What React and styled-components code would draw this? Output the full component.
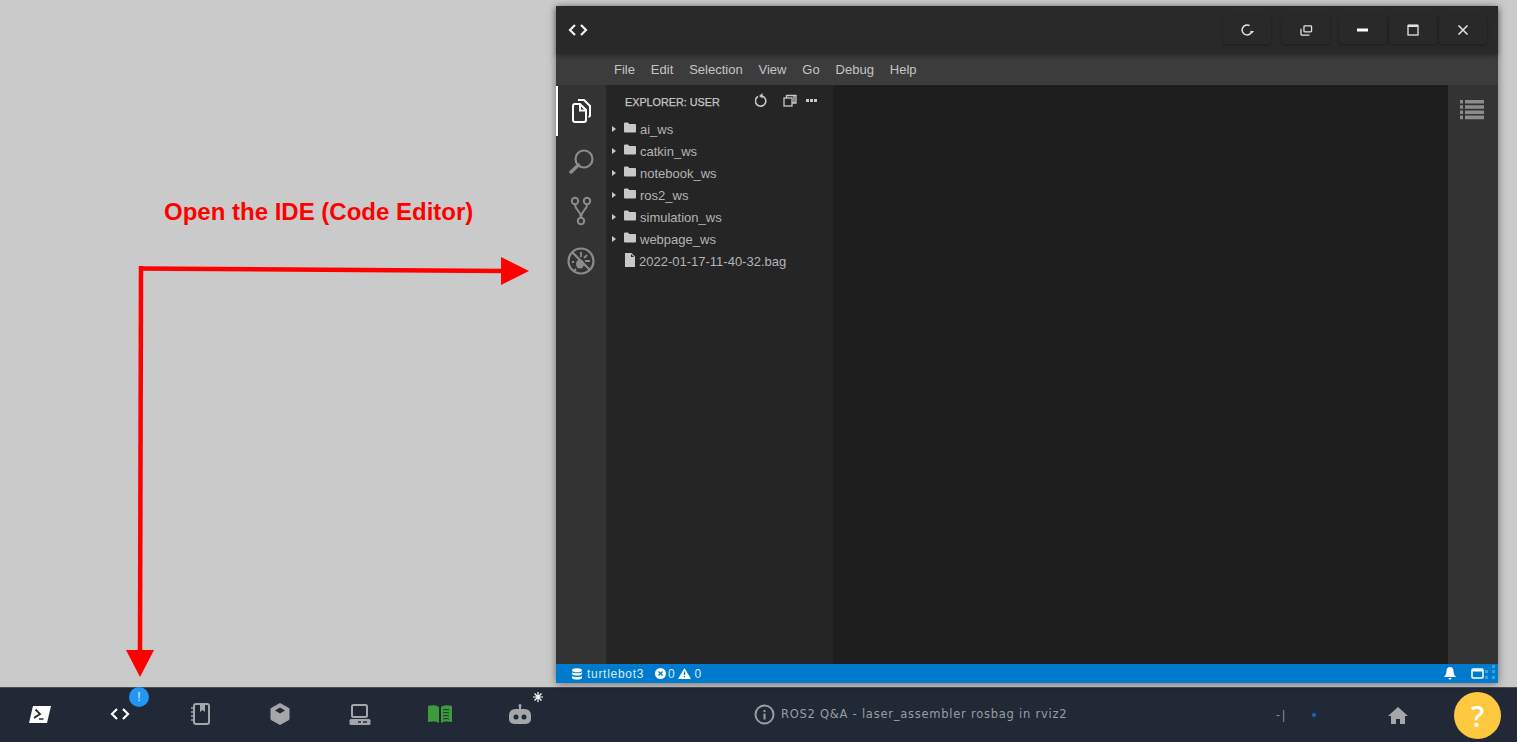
import React from "react";
import styled, { createGlobalStyle } from "styled-components";

const GlobalStyle = createGlobalStyle`
  html, body { margin: 0; padding: 0; height: 100%; overflow: hidden; }
  body { background: #cacaca; font-family: "Liberation Sans", Arial, sans-serif; }
`;

const Page = styled.div`
  width: 1517px;
  height: 742px;
  display: flex;
  flex-direction: column;
`;

const Stage = styled.div`
  position: relative;
  flex: 1;
  display: flex;
  justify-content: flex-end;
  padding: 6px 19px 4px 0;
`;

const Caption = styled.div`
  position: absolute;
  left: 164px;
  top: 197px;
  font-size: 24px;
  line-height: 30px;
  font-weight: 700;
  color: #ff0000;
  white-space: nowrap;
`;

const Arrows = styled.svg`
  position: absolute;
  left: 0;
  top: 0;
`;

const Window = styled.div`
  width: 942px;
  display: flex;
  flex-direction: column;
  box-shadow: 0 1px 8px rgba(0, 0, 0, 0.45);
`;

const TitleBar = styled.div`
  height: 48px;
  flex: none;
  display: flex;
  align-items: center;
  padding: 0 11px 0 12px;
  background: #292929;
  color: #f2f2f2;
  box-shadow: 0 2px 5px rgba(0, 0, 0, 0.3);
  position: relative;
  z-index: 1;
`;

const TitleActions = styled.div`
  margin-left: auto;
  display: flex;
  gap: 2px;
`;

const TitleBtn = styled.div`
  width: 48px;
  height: 28px;
  margin-left: ${(p) => p.$space || 0}px;
  display: flex;
  align-items: center;
  justify-content: center;
  border-radius: 4px;
  background: #292929;
  box-shadow: 0 1px 3px rgba(0, 0, 0, 0.35);
  color: #e4e4e4;
`;

const MenuBar = styled.div`
  height: 31px;
  flex: none;
  display: flex;
  align-items: center;
  gap: 15.9px;
  padding-left: 58px;
  background: #3c3c3c;
  color: #c4c4c4;
  font-size: 13px;
`;

const Workbench = styled.div`
  flex: 1;
  min-height: 0;
  display: flex;
`;

const ActivityBar = styled.div`
  width: 50px;
  flex: none;
  background: #333333;
  padding-top: 1px;
`;

const ActivityItem = styled.div`
  height: 50px;
  box-sizing: border-box;
  display: flex;
  align-items: center;
  justify-content: center;
  color: ${(p) => (p.$active ? "#ffffff" : "#8c8c8c")};
  border-left: 2px solid ${(p) => (p.$active ? "#ffffff" : "transparent")};
  padding-right: 2px;
`;

const SideBar = styled.div`
  width: 227px;
  flex: none;
  background: #252526;
`;

const SideHeader = styled.div`
  height: 33px;
  display: flex;
  align-items: center;
  padding: 0 16px 0 19px;
  color: #c6c6c6;
  font-size: 10.8px;
  -webkit-text-stroke: 0.25px #c6c6c6;
`;

const SideActions = styled.div`
  margin-left: auto;
  display: flex;
  align-items: center;
  padding-bottom: 2px;
  color: #c8c8c8;
`;

const SideAction = styled.svg`
  margin-left: ${(p) => p.$space || 0}px;
`;

const TreeRow = styled.div`
  height: 22px;
  display: flex;
  align-items: center;
  padding-left: 6px;
  color: #b4b4b4;
  font-size: 13px;
  white-space: nowrap;
`;

const Caret = styled.span`
  width: 0;
  height: 0;
  margin-right: 8px;
  border-left: 4px solid ${(p) => (p.$hidden ? "transparent" : "#c8c8c8")};
  border-top: 3px solid transparent;
  border-bottom: 3px solid transparent;
`;

const TreeIcon = styled.svg`
  flex: none;
  margin: 0 ${(p) => p.$gap}px 3px 0;
  color: #c8c8c8;
`;

const Editor = styled.div`
  flex: 1;
  background: #1e1e1e;
`;

const RightRail = styled.div`
  width: 50px;
  flex: none;
  box-sizing: border-box;
  background: #333333;
  display: flex;
  justify-content: center;
  padding: 15px 2px 0 0;
  color: #8c8c8c;
`;

const StatusBar = styled.div`
  position: relative;
  height: 19px;
  flex: none;
  display: flex;
  align-items: center;
  padding: 0 8px 0 15px;
  background: #007acc;
  color: #d8ecf8;
  font-size: 12px;
  letter-spacing: 0.7px;
`;

const StatusItem = styled.span`
  display: flex;
  align-items: center;
  gap: ${(p) => p.$gap || 3}px;
  margin-right: ${(p) => p.$after || 0}px;
`;

const StatusRight = styled.div`
  margin-left: auto;
  display: flex;
  align-items: center;
  gap: 15px;
  color: #ffffff;
  padding: 0 6px 1px 0;
`;

const GripDots = styled.svg`
  position: absolute;
  right: 2px;
  top: 0;
`;

const BottomBar = styled.div`
  height: 55px;
  flex: none;
  display: flex;
  align-items: center;
  background: #212936;
  border-top: 1px solid #4a4d52;
  box-sizing: border-box;
`;

const Dock = styled.div`
  display: flex;
`;

const DockBtn = styled.div`
  position: relative;
  width: 80px;
  height: 54px;
  box-sizing: border-box;
  padding-bottom: 2px;
  display: flex;
  align-items: center;
  justify-content: center;
  color: ${(p) => p.$color || "#a4a6a9"};
`;

const Badge = styled.span`
  position: absolute;
  left: 49px;
  top: -1px;
  width: 20px;
  height: 20px;
  border-radius: 50%;
  background: #2196f3;
  color: #e8f4ff;
  font-size: 12px;
  line-height: 20px;
  text-align: center;
`;

const Sparkle = styled.svg`
  position: absolute;
  left: 53px;
  top: 4px;
`;

const Lesson = styled.div`
  margin-left: 194px;
  padding-bottom: 2px;
  display: flex;
  align-items: center;
  gap: 6px;
  color: #9a9da1;
  font-family: "DejaVu Sans", sans-serif;
  font-size: 11.5px;
  letter-spacing: 0.75px;
  white-space: nowrap;
`;

const RightTools = styled.div`
  margin-left: auto;
  display: flex;
  align-items: center;
  padding-right: 16px;
`;

const Signal = styled.span`
  color: #8b8f95;
  font-size: 12px;
  letter-spacing: 2px;
  width: 36px;
`;

const Dot = styled.span`
  width: 4px;
  height: 4px;
  border-radius: 50%;
  background: #1c66b5;
  margin-right: 72px;
`;

const HelpBtn = styled.div`
  width: 47px;
  height: 47px;
  margin-left: 46px;
  border-radius: 50%;
  background: #ffc93f;
  color: #ffffff;
  display: flex;
  align-items: center;
  justify-content: center;
  font-family: "Open Sans", sans-serif;
  font-size: 29px;
  font-weight: 600;
`;

const CodeIcon = ({ size = 20 }) => (
  <svg width={size} height={size * 0.7} viewBox="0 0 20 14" fill="none" stroke="currentColor" strokeWidth="2.2">
    <path d="M7 2 2 7l5 5M13 2l5 5-5 5" />
  </svg>
);

const FolderIcon = () => (
  <TreeIcon $gap={4} width="12" height="11" viewBox="0 0 12 11" fill="currentColor">
    <path d="M0 1.5A1 1 0 0 1 1 .5h3l1.2 1.5H11a1 1 0 0 1 1 1V9.5a1 1 0 0 1-1 1H1a1 1 0 0 1-1-1z" />
  </TreeIcon>
);

const FileIcon = () => (
  <TreeIcon $gap={3} width="12" height="14" viewBox="0 0 12 14" fill="currentColor">
    <path d="M1 0h6.5L11 3.5V14H1zM7 1v3h3z" fillRule="evenodd" />
  </TreeIcon>
);

const rows = ["ai_ws", "catkin_ws", "notebook_ws", "ros2_ws", "simulation_ws", "webpage_ws"];
const menus = ["File", "Edit", "Selection", "View", "Go", "Debug", "Help"];

export default function App() {
  return (
    <Page>
      <GlobalStyle />
      <Stage>
        <Caption>Open the IDE (Code Editor)</Caption>
        <Arrows width="556" height="687" viewBox="0 0 556 687">
          <path d="M139 268.500 503 271" stroke="#ff0000" strokeWidth="4.500" fill="none" />
          <path d="M141 266 140 652" stroke="#ff0000" strokeWidth="4.500" fill="none" />
          <path d="M501 257 529 271 501 285z" fill="#ff0000" />
          <path d="M126 650h28l-14 27z" fill="#ff0000" />
        </Arrows>
        <Window>
          <TitleBar>
            <CodeIcon />
            <TitleActions>
              <TitleBtn>
                <svg width="14" height="14" viewBox="0 0 14 14" fill="none" stroke="currentColor" strokeWidth="1.500">
                  <path d="M12 8A5 5 0 1 1 9.500 2.500" />
                  <path d="M10 8h4l-2 2.500z" fill="currentColor" stroke="none" />
                </svg>
              </TitleBtn>
              <TitleBtn $space={9}>
                <svg width="13" height="11" viewBox="0 0 15 13" fill="none" stroke="currentColor" strokeWidth="1.500">
                  <rect x="4.500" y="1" width="9" height="7" rx="1" />
                  <path d="M1 4.500V11a1 1 0 0 0 1 1h9" />
                </svg>
              </TitleBtn>
              <TitleBtn $space={7}>
                <svg width="12" height="4" viewBox="0 0 12 4"><rect width="11" height="3" y="0.500" fill="#fff" /></svg>
              </TitleBtn>
              <TitleBtn>
                <svg width="12" height="12" viewBox="0 0 12 12" fill="none" stroke="currentColor">
                  <rect x="1" y="1.500" width="10" height="9.500" strokeWidth="1.300" />
                  <rect x="1" y="0.500" width="10" height="2.500" fill="currentColor" stroke="none" />
                </svg>
              </TitleBtn>
              <TitleBtn>
                <svg width="12" height="12" viewBox="0 0 12 12" stroke="currentColor" strokeWidth="1.500">
                  <path d="M1.500 1.500l9 9M10.500 1.500l-9 9" />
                </svg>
              </TitleBtn>
            </TitleActions>
          </TitleBar>
          <MenuBar>
            {menus.map((m) => (
              <span key={m}>{m}</span>
            ))}
          </MenuBar>
          <Workbench>
            <ActivityBar>
              <ActivityItem $active>
                <svg width="24" height="26" viewBox="0 0 24 26" fill="none" stroke="currentColor" strokeWidth="2">
                  <path d="M6 6h5l6 6v10a2 2 0 0 1-2 2H6a2 2 0 0 1-2-2V8a2 2 0 0 1 2-2z" />
                  <path d="M11 6.500v6h5.500" />
                  <path d="M9 2h6l6 6v9.500a2 2 0 0 1-1.500 1.500" />
                </svg>
              </ActivityItem>
              <ActivityItem>
                <svg width="26" height="26" viewBox="0 0 26 26" fill="none" stroke="currentColor">
                  <circle cx="16" cy="11" r="8.500" strokeWidth="2.200" />
                  <path d="M10.500 17 3 24" strokeWidth="3.400" strokeLinecap="round" />
                </svg>
              </ActivityItem>
              <ActivityItem>
                <svg width="22" height="30" viewBox="0 0 22 30" fill="none" stroke="currentColor" strokeWidth="2">
                  <circle cx="5" cy="5" r="3.200" />
                  <circle cx="17" cy="5" r="3.200" />
                  <circle cx="11" cy="25" r="3.200" />
                  <path d="M5 8.500c0 6 6 6 6 13M17 8.500c0 6-6 6-6 13" />
                </svg>
              </ActivityItem>
              <ActivityItem>
                <svg width="28" height="28" viewBox="0 0 28 28" fill="none" stroke="currentColor" strokeWidth="2.200">
                  <circle cx="14" cy="14" r="12.500" />
                  <path d="M5 5l18 18" />
                  <ellipse cx="13" cy="17" rx="4" ry="4.500" fill="currentColor" stroke="none" />
                  <path d="M14 5v5M20 8l-3 3M23 14h-5M7 15H5M9 22l-2 2" strokeWidth="1.800" />
                </svg>
              </ActivityItem>
            </ActivityBar>
            <SideBar>
              <SideHeader>
                EXPLORER: USER
                <SideActions>
                  <SideAction width="14" height="15" viewBox="0 0 14 15" fill="none" stroke="currentColor" strokeWidth="1.600">
                    <path d="M3 3.500A5.200 5.200 0 1 0 7 3" />
                    <path d="M7.500 0v5.500L4 3z" fill="currentColor" stroke="none" />
                  </SideAction>
                  <SideAction $space={14} width="14" height="13" viewBox="0 0 14 13" fill="none" stroke="currentColor" strokeWidth="1.300">
                    <rect x="1" y="4" width="8" height="8" />
                    <path d="M3.500 4V1.500H13V9h-4M6 1.500V1M11 1.500v7" />
                  </SideAction>
                  <SideAction $space={9} width="11" height="3" viewBox="0 0 11 3" fill="currentColor">
                    <rect width="3" height="3" />
                    <rect x="4" width="3" height="3" />
                    <rect x="8" width="3" height="3" />
                  </SideAction>
                </SideActions>
              </SideHeader>
              {rows.map((r) => (
                <TreeRow key={r}>
                  <Caret />
                  <FolderIcon />
                  {r}
                </TreeRow>
              ))}
              <TreeRow>
                <Caret $hidden />
                <FileIcon />
                2022-01-17-11-40-32.bag
              </TreeRow>
            </SideBar>
            <Editor />
            <RightRail>
              <svg width="24" height="20" viewBox="0 0 24 20" fill="currentColor">
                <path d="M0 0h3v3.600H0zM5 0h19v3.600H5zM0 5.200h3v3.600H0zM5 5.200h19v3.600H5zM0 10.400h3V14H0zM5 10.400h19V14H5zM0 15.600h3v3.600H0zM5 15.600h19v3.600H5z" />
              </svg>
            </RightRail>
          </Workbench>
          <StatusBar>
            <StatusItem $gap={4} $after={11}>
              <svg width="12" height="12" viewBox="0 0 12 12" fill="#fff">
                <ellipse cx="6" cy="2.200" rx="5" ry="2" />
                <path d="M1 4.300c1 1.400 9 1.400 10 0v2c-1 1.600-9 1.600-10 0zM1 8c1 1.400 9 1.400 10 0v2c-1 2-9 2-10 0z" />
              </svg>
              turtlebot3
            </StatusItem>
            <StatusItem $gap={2} $after={3}>
              <svg width="11" height="11" viewBox="0 0 11 11">
                <circle cx="5.500" cy="5.500" r="5.500" fill="#fff" />
                <path d="M3.500 3.500l4 4M7.500 3.500l-4 4" stroke="#007acc" strokeWidth="1.400" />
              </svg>
              0
            </StatusItem>
            <StatusItem>
              <svg width="13" height="11" viewBox="0 0 13 11">
                <path d="M6.500 0 13 11H0z" fill="#fff" />
                <path d="M6.500 3.500V7M6.500 8v1.500" stroke="#007acc" strokeWidth="1.300" />
              </svg>
              0
            </StatusItem>
            <StatusRight>
              <svg width="12" height="13" viewBox="0 0 12 13" fill="currentColor">
                <path d="M6 0C3.500 0 2.500 2 2.500 4c0 3-1 4.500-2.500 6h12c-1.500-1.500-2.500-3-2.500-6 0-2-1-4-3.500-4zM4.500 11h3a1.500 1.500 0 0 1-3 0z" />
              </svg>
              <svg width="13" height="11" viewBox="0 0 13 11" fill="none" stroke="currentColor" strokeWidth="1.500">
                <rect x="1" y="1" width="11" height="9" rx="1" />
                <path d="M1 2.500h11" strokeWidth="2" />
              </svg>
            </StatusRight>
            <GripDots width="11" height="17" viewBox="0 0 11 17" fill="#3d9ddf">
              <path d="M7 1h3v3H7zM0 6h3v3H0zM7 6h3v3H7zM0 12h3v3H0zM7 12h3v3H7z" />
            </GripDots>
          </StatusBar>
        </Window>
      </Stage>
      <BottomBar>
        <Dock>
          <DockBtn $color="#ffffff">
            <svg width="22" height="17" viewBox="0 0 22 17">
              <path d="M4 0h18l-4 17H0z" fill="#fff" />
              <path d="M6.500 3.500 11 8l-6 4" fill="none" stroke="#212936" strokeWidth="1.800" />
              <path d="M10 13h4.500" stroke="#212936" strokeWidth="1.500" />
            </svg>
          </DockBtn>
          <DockBtn $color="#ffffff">
            <CodeIcon />
            <Badge>!</Badge>
          </DockBtn>
          <DockBtn>
            <svg width="20" height="22" viewBox="0 0 20 22" fill="none" stroke="currentColor" strokeWidth="2">
              <rect x="4" y="1" width="15" height="20" rx="2" />
              <path d="M10 1v8l2.500-2 2.500 2V1" fill="currentColor" stroke="none" />
              <path d="M1 5h4M1 9h4M1 13h4M1 17h4" strokeWidth="1.500" />
            </svg>
          </DockBtn>
          <DockBtn>
            <svg width="20" height="22" viewBox="0 0 20 22">
              <path d="M10 .5 19 5.500v11L10 21.500 1 16.500v-11z" fill="currentColor" stroke="currentColor" strokeLinejoin="round" />
              <path d="M10 4.500 15 7.500 10 10.500 5 7.500z" fill="#212936" />
            </svg>
          </DockBtn>
          <DockBtn>
            <svg width="22" height="21" viewBox="0 0 22 21" fill="none" stroke="currentColor" strokeWidth="2">
              <rect x="3" y="1" width="15" height="12" rx="1.500" />
              <rect x="0.500" y="15" width="21" height="6" rx="1.500" fill="currentColor" stroke="none" />
              <path d="M9 18h3M14 18h4" stroke="#212936" strokeWidth="1.500" />
            </svg>
          </DockBtn>
          <DockBtn $color="#3d9a3d">
            <svg width="24" height="18" viewBox="0 0 24 18" fill="currentColor">
              <path d="M0 1c4-1.200 8-1.200 11 1v16c-3-1.800-7-1.800-11-1z" />
              <path d="M24 1c-4-1.200-8-1.200-11 1v16c3-1.800 7-1.800 11-1z" />
              <path d="M15 5c2-.6 4-.6 6 0M15 8c2-.6 4-.6 6 0M15 11c2-.6 4-.6 6 0M15 14c2-.6 4-.6 6 0" stroke="#212936" fill="none" />
            </svg>
          </DockBtn>
          <DockBtn>
            <svg width="24" height="21" viewBox="0 0 24 21" fill="currentColor">
              <circle cx="12" cy="1.500" r="1.500" />
              <rect x="11" y="2" width="2" height="4" />
              <path d="M7 5h10a6 6 0 0 1 6 6v4a5 5 0 0 1-5 5H6a5 5 0 0 1-5-5v-4a6 6 0 0 1 6-6z" />
              <circle cx="8" cy="13" r="2.500" fill="#212936" />
              <circle cx="16" cy="13" r="2.500" fill="#212936" />
            </svg>
            <Sparkle width="10" height="10" viewBox="0 0 10 10" stroke="#ffffff" strokeWidth="1.200">
              <path d="M5 0v10M0 5h10M1.500 1.500l7 7M8.500 1.500l-7 7" />
            </Sparkle>
          </DockBtn>
        </Dock>
        <Lesson>
          <svg width="21" height="21" viewBox="0 0 21 21" fill="none" stroke="currentColor" strokeWidth="2">
            <circle cx="10.500" cy="10.500" r="9" />
            <path d="M10.500 9.500v6M10.500 6v2" />
          </svg>
          ROS2 Q&amp;A - laser_assembler rosbag in rviz2
        </Lesson>
        <RightTools>
          <Signal>-|</Signal>
          <Dot />
          <svg width="20" height="17" viewBox="0 0 20 17" fill="#a4a6a9">
            <path d="M10 0 20 9h-3v8h-5v-5H8v5H3V9H0z" />
          </svg>
          <HelpBtn>?</HelpBtn>
        </RightTools>
      </BottomBar>
    </Page>
  );
}
